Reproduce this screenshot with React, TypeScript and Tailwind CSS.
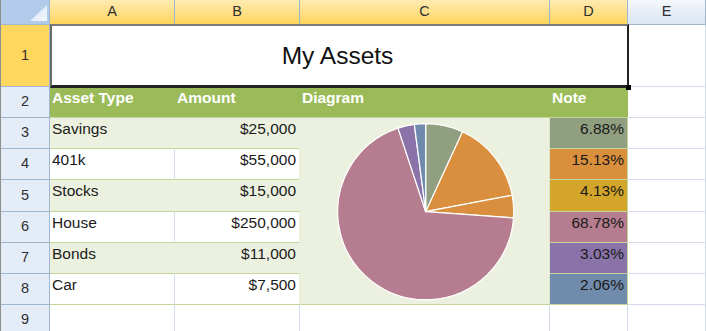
import React from "react";

const rows = [
  { name: "Savings", amt: "$25,000", v: 25000, pct: "6.88%", note: "bg-[#919f81]", pie: "#909f80", band: true },
  { name: "401k", amt: "$55,000", v: 55000, pct: "15.13%", note: "bg-[#da8f3d]", pie: "#d98f3d", band: false },
  { name: "Stocks", amt: "$15,000", v: 15000, pct: "4.13%", note: "bg-[#d3a52a]", pie: "#d98f3d", band: true },
  { name: "House", amt: "$250,000", v: 250000, pct: "68.78%", note: "bg-[#b57d8f]", pie: "#b57d8f", band: false },
  { name: "Bonds", amt: "$11,000", v: 11000, pct: "3.03%", note: "bg-[#8a73a9]", pie: "#8a73a9", band: true },
  { name: "Car", amt: "$7,500", v: 7500, pct: "2.06%", note: "bg-[#718bad]", pie: "#6f8aad", band: false },
];

function Pie() {
  const total = rows.reduce((s, r) => s + r.v, 0);
  const cx = 125.7;
  const cy = 93.7;
  const r = 88;
  let acc = 0;
  const paths = rows.map((row, i) => {
    const a0 = (acc / total) * Math.PI * 2 - Math.PI / 2;
    acc += row.v;
    const a1 = (acc / total) * Math.PI * 2 - Math.PI / 2;
    const large = a1 - a0 > Math.PI ? 1 : 0;
    const x0 = cx + r * Math.cos(a0);
    const y0 = cy + r * Math.sin(a0);
    const x1 = cx + r * Math.cos(a1);
    const y1 = cy + r * Math.sin(a1);
    const d = `M${cx} ${cy} L${x0} ${y0} A${r} ${r} 0 ${large} 1 ${x1} ${y1} Z`;
    return <path key={i} d={d} fill={row.pie} stroke="#ffffff" strokeWidth={1.2} strokeLinejoin="round" />;
  });
  return (
    <svg width="249" height="186" viewBox="0 0 249 186" className="block">
      {paths}
    </svg>
  );
}

const font = { fontFamily: '"Liberation Sans", Arial, sans-serif' };

export default function App() {
  const rh = "flex items-center justify-center border-r border-b border-[#9eb6ce] bg-[#e4ecf7] text-[14.5px] text-[#303030]";
  const chSel = "flex items-center justify-center border-r border-b border-[#9eb6ce] bg-gradient-to-b from-[#ffeab0] to-[#ffd55a] text-[14.5px] text-[#303030]";
  const grid = "border-r border-b border-[#d4dcea] bg-white";
  const cellText = "text-[15.5px] leading-[18px] pt-[2px] px-[2px] text-[#1a1a1a] whitespace-nowrap overflow-hidden";
  return (
    <div style={font} className="w-[706px] h-[331px] overflow-hidden bg-white border-l border-[#8e8e8e]">
      <div className="grid grid-cols-[49px_125px_125px_250px_78px_78px] grid-rows-[25px_62px_31px_31px_31px_32px_31px_31px_31px_31px]">
        {/* corner */}
        <div className="relative border-r border-b border-[#9eb6ce] bg-[#b3cbeb]">
          <svg className="absolute left-0 top-0" width="49" height="24" viewBox="0 0 49 24">
            <defs>
              <linearGradient id="tri" x1="0" y1="0" x2="1" y2="1">
                <stop offset="0" stopColor="#d6e3f5" />
                <stop offset="1" stopColor="#f4f8fd" />
              </linearGradient>
            </defs>
            <polygon points="46,5 46,21 29,21" fill="url(#tri)" />
          </svg>
        </div>
        <div className={chSel}>A</div>
        <div className={chSel}>B</div>
        <div className={chSel}>C</div>
        <div className={chSel}>D</div>
        <div className="flex items-center justify-center border-r border-b border-[#9eb6ce] bg-gradient-to-b from-[#f5f8fc] to-[#dbe4f1] text-[14.5px] text-[#303030]">E</div>

        {/* row 1 */}
        <div className="flex items-center justify-center border-r border-b border-[#9eb6ce] bg-[#ffd75e] text-[14.5px] text-[#303030]">1</div>
        <div className="relative col-span-4 flex items-center justify-center bg-white">
          <span className="text-[24.5px] text-[#111] pt-[1px] mr-[3px]">My Assets</span>
          <div className="pointer-events-none absolute left-0 top-[-1px] right-[-1px] bottom-[-1px] border-l-2 border-t-2 border-l-[#6a6a6a] border-t-[#7a7a7a] border-r-2 border-b-[3px] border-r-[#222] border-b-[#222]" />
          <div className="absolute right-[-3px] bottom-[-3px] h-[5px] w-[5px] bg-black" />
        </div>
        <div className={grid}></div>

        {/* row 2 */}
        <div className={rh}>2</div>
        <div className="border-b border-[#c3d69b] bg-[#9bbb59]"><div className={cellText + " font-bold !text-white"}>Asset Type</div></div>
        <div className="border-b border-[#c3d69b] bg-[#9bbb59]"><div className={cellText + " font-bold !text-white"}>Amount</div></div>
        <div className="border-b border-[#c3d69b] bg-[#9bbb59]"><div className={cellText + " font-bold !text-white"}>Diagram</div></div>
        <div className="border-b border-[#c3d69b] bg-[#9bbb59]"><div className={cellText + " font-bold !text-white"}>Note</div></div>
        <div className={grid}></div>

        {rows.map((row, i) => (
          <React.Fragment key={row.name}>
            <div className={rh}>{i + 3}</div>
            <div className={"border-b border-[#c3d69b] " + (row.band ? "bg-[#ebf1de] border-r border-r-[#ebf1de]" : "bg-white border-r border-r-[#d4dcea]")}>
              <div className={cellText}>{row.name}</div>
            </div>
            <div className={"border-b border-[#c3d69b] border-r border-r-[#ebf1de] " + (row.band ? "bg-[#ebf1de]" : "bg-white")}>
              <div className={cellText + " text-right pr-[3px]"}>{row.amt}</div>
            </div>
            {i === 0 && (
              <div className="row-span-6 border-r border-r-[#dde5cf] border-b border-[#c3d69b] bg-[#ebf1de]">
                <Pie />
              </div>
            )}
            <div className={"border-b border-[#c3d69b] border-r border-r-[#c3d69b] " + row.note}>
              <div className={cellText + " text-right pr-[3px]"}>{row.pct}</div>
            </div>
            <div className={grid}></div>
          </React.Fragment>
        ))}

        {/* row 9 */}
        <div className={rh}>9</div>
        <div className={grid}></div>
        <div className={grid}></div>
        <div className={grid}></div>
        <div className={grid}></div>
        <div className={grid}></div>
      </div>
    </div>
  );
}
